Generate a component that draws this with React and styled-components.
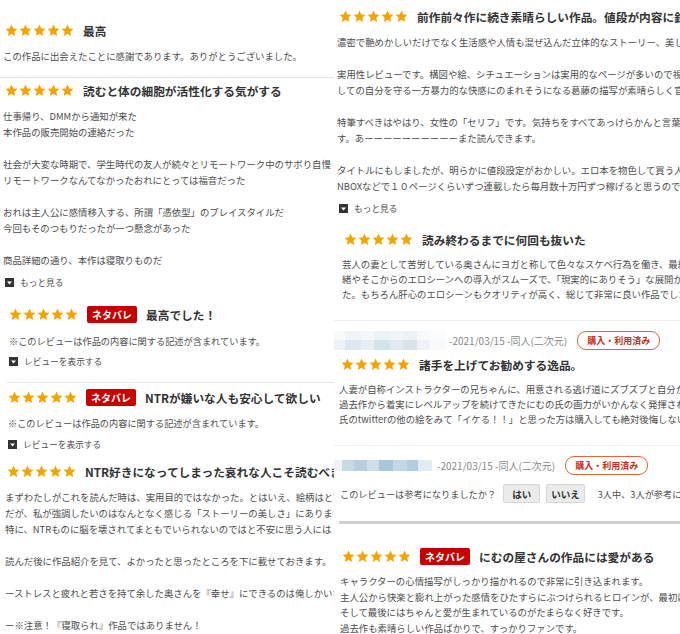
import React from "react";
import styled, { createGlobalStyle } from "styled-components";

const GlobalStyle = createGlobalStyle`
  html, body {
    margin: 0;
    padding: 0;
    background: #fff;
  }
  body {
    font-family: "Noto Sans CJK JP", "Noto Sans", sans-serif;
  }
`;

const Stars = () => (
  <StarRow>
    {[0, 1, 2, 3, 4].map((i) => (
      <svg key={i} width="13" height="13" viewBox="0 0 24 24">
        <polygon
          points="12,1 15.3,8.1 23,8.9 17.2,14.2 18.8,22 12,18.1 5.2,22 6.8,14.2 1,8.9 8.7,8.1"
          fill="#f5a300"
        />
      </svg>
    ))}
  </StarRow>
);

const ToggleIcon = () => (
  <svg width="9" height="9" viewBox="0 0 9 9">
    <rect width="9" height="9" fill="#333" />
    <polygon points="2,3.5 7,3.5 4.5,6.5" fill="#fff" />
  </svg>
);

const Lines = ({ lines, lh }) => (
  <Body $lh={lh}>
    {lines.map((l, i) => (
      <Line key={i}>{l || "\u00a0"}</Line>
    ))}
  </Body>
);

const Review = ({ mt, pl, spoiler, title, children }) => (
  <ReviewBlock $mt={mt} $pl={pl}>
    <Header>
      <Stars />
      {spoiler && <SpoilerBadge>ネタバレ</SpoilerBadge>}
      <Title>{title}</Title>
    </Header>
    {children}
  </ReviewBlock>
);

const Meta = ({ mt, blur, date }) => (
  <MetaRow $mt={mt}>
    <UserBlur $variant={blur} />
    <MetaText>{date}</MetaText>
    <PurchasedBadge>購入・利用済み</PurchasedBadge>
  </MetaRow>
);

const App = () => {
  return (
    <>
      <GlobalStyle />
      <Page>
        <Column>
          <Review mt={21} pl={5} title="最高">
            <Lines lines={["この作品に出会えたことに感謝であります。ありがとうございました。"]} />
          </Review>
          <Divider $mt={13} $ml={0} />

          <Review mt={3} pl={5} title="読むと体の細胞が活性化する気がする">
            <Lines
              lines={[
                "仕事帰り、DMMから通知が来た",
                "本作品の販売開始の連絡だった",
                "",
                "社会が大変な時期で、学生時代の友人が続々とリモートワーク中のサボり自慢",
                "リモートワークなんてなかったおれにとっては福音だった",
                "",
                "おれは主人公に感情移入する、所謂「憑依型」のプレイスタイルだ",
                "今回もそのつもりだったが一つ懸念があった",
                "",
                "商品詳細の通り、本作は寝取りものだ",
              ]}
            />
            <Toggle $mt={6}>
              <ToggleIcon />
              もっと見る
            </Toggle>
          </Review>

          <Review mt={15} pl={9} spoiler title="最高でした！">
            <Note $mt={10}>※このレビューは作品の内容に関する記述が含まれています。</Note>
            <Toggle $mt={4}>
              <ToggleIcon />
              レビューを表示する
            </Toggle>
          </Review>
          <Divider $mt={13} $ml={7} />

          <Review mt={5} pl={8} spoiler title="NTRが嫌いな人も安心して欲しい">
            <Note $mt={9}>※このレビューは作品の内容に関する記述が含まれています。</Note>
            <Toggle $mt={5}>
              <ToggleIcon />
              レビューを表示する
            </Toggle>
          </Review>

          <Review mt={10} pl={7} title="NTR好きになってしまった哀れな人こそ読むべき">
            <Lines
              lines={[
                "まずわたしがこれを読んだ時は、実用目的ではなかった。とはいえ、絵柄はとても",
                "だが、私が強調したいのはなんとなく感じる「ストーリーの美しさ」にあります",
                "特に、NTRものに脳を壊されてまともでいられないのではと不安に思う人には",
                "",
                "読んだ後に作品紹介を見て、よかったと思ったところを下に載せておきます。",
                "",
                "ーストレスと疲れと若さを持て余した奥さんを『幸せ』にできるのは俺しかいない",
                "",
                "ー※注意！『寝取られ』作品ではありません！",
              ]}
            />
          </Review>
        </Column>

        <Column>
          <Review mt={7} pl={5} title="前作前々作に続き素晴らしい作品。値段が内容に釣り合っていない">
            <Lines
              lines={[
                "濃密で艶めかしいだけでなく生活感や人情も混ぜ込んだ立体的なストーリー、美しい",
                "",
                "実用性レビューです。構図や絵、シチュエーションは実用的なページが多いので視",
                "しての自分を守る一方暴力的な快感にのまれそうになる葛藤の描写が素晴らしく官",
                "",
                "特筆すべきはやはり、女性の「セリフ」です。気持ちをすべてあっけらかんと言葉",
                "す。あーーーーーーーーーーまた読んできます。",
                "",
                "タイトルにもしましたが、明らかに値段設定がおかしい。エロ本を物色して買う人",
                "NBOXなどで１０ページくらいずつ連載したら毎月数十万円ずつ稼げると思うので",
              ]}
            />
            <Toggle $mt={6}>
              <ToggleIcon />
              もっと見る
            </Toggle>
          </Review>

          <Review mt={14} pl={10} title="読み終わるまでに何回も抜いた">
            <Lines
              lh={15}
              lines={[
                "芸人の妻として苦労している奥さんにヨガと称して色々なスケベ行為を働き、最終",
                "緒やそこからのエロシーンへの導入がスムーズで、「現実的にありそう」な展開が",
                "た。もちろん肝心のエロシーンもクオリティが高く、総じて非常に良い作品でした",
              ]}
            />
          </Review>
          <Divider $mt={18} $ml={0} $light />

          <Meta mt={10} blur="a" date="-2021/03/15 -同人(二次元)" />

          <Review mt={5} pl={7} title="諸手を上げてお勧めする逸品。">
            <Lines
              lh={15}
              lines={[
                "人妻が自称インストラクターの兄ちゃんに、用意される逃げ道にズブズブと自分から",
                "過去作から着実にレベルアップを続けてきたにむの氏の画力がいかんなく発揮され",
                "氏のtwitterの他の絵をみて「イケる！！」と思った方は購入しても絶対後悔しない",
              ]}
            />
          </Review>
          <Divider $mt={18} $ml={0} $light />

          <Meta mt={10} blur="b" date="-2021/03/15 -同人(二次元)" />

          <HelpfulRow>
            <HelpfulText>このレビューは参考になりましたか？</HelpfulText>
            <VoteButton>はい</VoteButton>
            <VoteButton>いいえ</VoteButton>
            <HelpfulCount>3人中、3人が参考になったと言っています</HelpfulCount>
          </HelpfulRow>
          <ThickRule />

          <Review mt={23} pl={8} spoiler title="にむの屋さんの作品には愛がある">
            <Lines
              lh={15.5}
              lines={[
                "キャラクターの心情描写がしっかり描かれるので非常に引き込まれます。",
                "主人公から快楽と膨れ上がった感情をひたすらにぶつけられるヒロインが、最初は",
                "そして最後にはちゃんと愛が生まれているのがたまらなく好きです。",
                "過去作も素晴らしい作品ばかりで、すっかりファンです。",
              ]}
            />
          </Review>
        </Column>
      </Page>
    </>
  );
};

const Page = styled.div`
  display: grid;
  grid-template-columns: 334px 346px;
  width: 680px;
  height: 634px;
  overflow: hidden;
  background: #fff;
`;

const Column = styled.div`
  display: flex;
  flex-direction: column;
  overflow: hidden;
  min-width: 0;
`;

const ReviewBlock = styled.div`
  margin-top: ${(p) => p.$mt}px;
  padding-left: ${(p) => p.$pl}px;
  display: flex;
  flex-direction: column;
`;

const Header = styled.div`
  display: flex;
  align-items: center;
  height: 18px;
  gap: 8px;
  white-space: nowrap;
`;

const StarRow = styled.div`
  display: flex;
  gap: 1px;
  flex-shrink: 0;

  svg {
    display: block;
  }
`;

const SpoilerBadge = styled.span`
  flex-shrink: 0;
  display: inline-flex;
  align-items: center;
  height: 17px;
  padding: 0 5px;
  background: #c80000;
  color: #fff;
  border-radius: 2px;
  font-size: 10px;
  font-weight: 700;
  margin-left: 1px;
`;

const Title = styled.span`
  font-size: 11.7px;
  font-weight: 700;
  color: #333;
  margin-left: 1px;
`;

const Body = styled.div`
  margin-top: 9px;
  margin-left: -2px;
  font-size: 9.4px;
  line-height: ${(p) => p.$lh || 16}px;
  color: #4d4d4d;
  white-space: nowrap;
`;

const Line = styled.div``;

const Note = styled.div`
  margin-top: ${(p) => p.$mt}px;
  font-size: 9.2px;
  line-height: 16px;
  color: #4d4d4d;
  white-space: nowrap;
`;

const Toggle = styled.div`
  margin-top: ${(p) => p.$mt}px;
  display: flex;
  align-items: center;
  gap: 6px;
  height: 16px;
  font-size: 8.7px;
  color: #4d4d4d;
  white-space: nowrap;

  svg {
    display: block;
    flex-shrink: 0;
  }
`;

const Divider = styled.div`
  margin-top: ${(p) => p.$mt}px;
  margin-left: ${(p) => p.$ml}px;
  height: 1px;
  background: ${(p) => (p.$light ? "#f0f0f0" : "#e6e6e6")};
  flex-shrink: 0;
`;

const MetaRow = styled.div`
  margin-top: ${(p) => p.$mt}px;
  display: flex;
  align-items: center;
  height: 19px;
  white-space: nowrap;
`;

const UserBlur = styled.div`
  flex-shrink: 0;
  width: ${(p) => (p.$variant === "a" ? 112 : 98)}px;
  height: ${(p) => (p.$variant === "a" ? 19 : 11)}px;
  margin-right: ${(p) => (p.$variant === "a" ? 3 : 5)}px;
  filter: blur(0.6px);
  background: ${(p) =>
    p.$variant === "a"
      ? `linear-gradient(180deg, rgba(255,255,255,0.55) 0 45%, rgba(255,255,255,0) 45%),
         linear-gradient(90deg, #eef2f6 0 10%, #dfe7ef 10% 24%, #e9eef3 24% 36%, #d6e2ec 36% 50%, #e2e9f0 50% 62%, #d9e3ec 62% 74%, #eef2f6 74% 86%, #f7f9fb 86% 100%)`
      : `linear-gradient(90deg, #eef3f7 0 8%, #c9dae7 8% 20%, #b7cfe0 20% 34%, #cfdeea 34% 46%, #aac6da 46% 60%, #c4d7e6 60% 74%, #b4cce0 74% 86%, #e4ecf3 86% 100%)`};
`;

const MetaText = styled.span`
  font-size: 10px;
  color: #888;
  margin-right: 10px;
`;

const PurchasedBadge = styled.span`
  flex-shrink: 0;
  display: inline-flex;
  align-items: center;
  height: 17px;
  padding: 0 9px;
  border: 1px solid #e2643a;
  border-radius: 9px;
  color: #c8301a;
  font-size: 9px;
  font-weight: 700;
`;

const HelpfulRow = styled.div`
  margin-top: 9px;
  padding-left: 6px;
  display: flex;
  align-items: center;
  height: 20px;
  white-space: nowrap;
`;

const HelpfulText = styled.span`
  font-size: 9.2px;
  color: #4d4d4d;
  margin-right: 7px;
`;

const VoteButton = styled.span`
  flex-shrink: 0;
  display: inline-flex;
  align-items: center;
  justify-content: center;
  box-sizing: border-box;
  min-width: 37px;
  height: 19px;
  padding: 0 4px;
  margin-right: 6px;
  background: #ebebeb;
  border: 1px solid #d6d6d6;
  border-radius: 2px;
  font-size: 9.5px;
  font-weight: 700;
  color: #333;
`;

const HelpfulCount = styled.span`
  margin-left: 7px;
  font-size: 9.2px;
  color: #4d4d4d;
`;

const ThickRule = styled.div`
  margin-top: 18px;
  margin-left: 5px;
  height: 3px;
  background: #cfcfcf;
  flex-shrink: 0;
`;

export default App;
